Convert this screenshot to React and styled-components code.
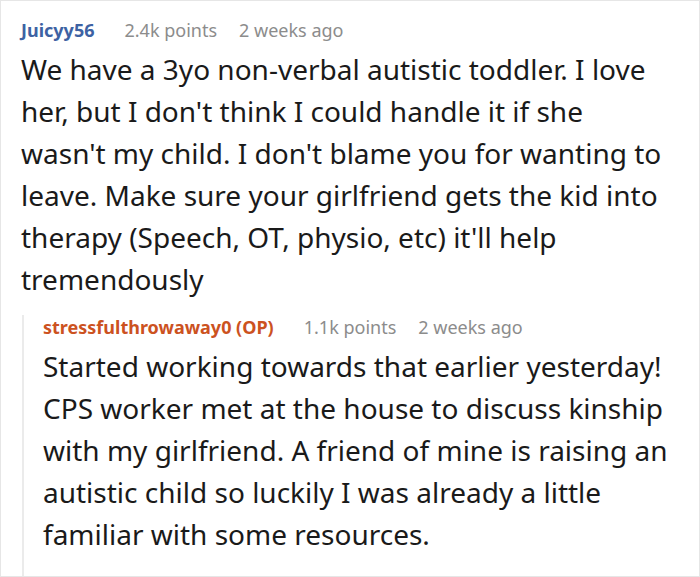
import styled, { createGlobalStyle } from 'styled-components'

const GlobalStyle = createGlobalStyle`
  html, body {
    margin: 0;
    padding: 0;
    background: #ffffff;
  }
  body {
    font-family: "Noto Sans", "Open Sans", sans-serif;
  }
`

const Page = styled.div`
  box-sizing: border-box;
  width: 700px;
  height: 577px;
  border: 1px solid #e6e6e6;
  padding-top: 17px;
  display: flex;
  flex-direction: column;
  overflow: hidden;
`

const Comment = styled.div`
  padding-left: ${({ $nested }) => ($nested ? '19px' : '20px')};
  padding-right: ${({ $nested }) => ($nested ? '18px' : '34px')};
  margin-left: ${({ $nested }) => ($nested ? '21px' : '0')};
  margin-top: ${({ $nested }) => ($nested ? '15px' : '0')};
  border-left: ${({ $nested }) => ($nested ? '2px solid #ebebeb' : 'none')};
  flex: ${({ $nested }) => ($nested ? '1' : 'none')};
`

const Header = styled.div`
  display: flex;
  align-items: baseline;
  gap: 22px;
  font-size: 18px;
  line-height: 24px;
`

const Author = styled.span`
  font-weight: 700;
  margin-right: 8px;
  color: ${({ $op }) => ($op ? '#cc521f' : '#3d62a3')};
`

const Meta = styled.span`
  color: #8c8c8c;
`

const Body = styled.p`
  margin: 6px 0 0 0;
  font-size: 28px;
  line-height: 42px;
  color: #1a1a1a;
`

const comments = [
  {
    author: 'Juicyy56',
    points: '2.4k points',
    time: '2 weeks ago',
    text: "We have a 3yo non-verbal autistic toddler. I love her, but I don't think I could handle it if she wasn't my child. I don't blame you for wanting to leave. Make sure your girlfriend gets the kid into therapy (Speech, OT, physio, etc) it'll help tremendously",
  },
  {
    author: 'stressfulthrowaway0 (OP)',
    points: '1.1k points',
    time: '2 weeks ago',
    text: 'Started working towards that earlier yesterday! CPS worker met at the house to discuss kinship with my girlfriend. A friend of mine is raising an autistic child so luckily I was already a little familiar with some resources.',
    op: true,
  },
]

function CommentBlock({ comment, nested, children }) {
  return (
    <Comment $nested={nested}>
      <Header>
        <Author $op={comment.op}>{comment.author}</Author>
        <Meta>{comment.points}</Meta>
        <Meta>{comment.time}</Meta>
      </Header>
      <Body>{comment.text}</Body>
      {children}
    </Comment>
  )
}

export default function App() {
  return (
    <>
      <GlobalStyle />
      <Page>
        <CommentBlock comment={comments[0]} />
        <CommentBlock comment={comments[1]} nested />
      </Page>
    </>
  )
}
